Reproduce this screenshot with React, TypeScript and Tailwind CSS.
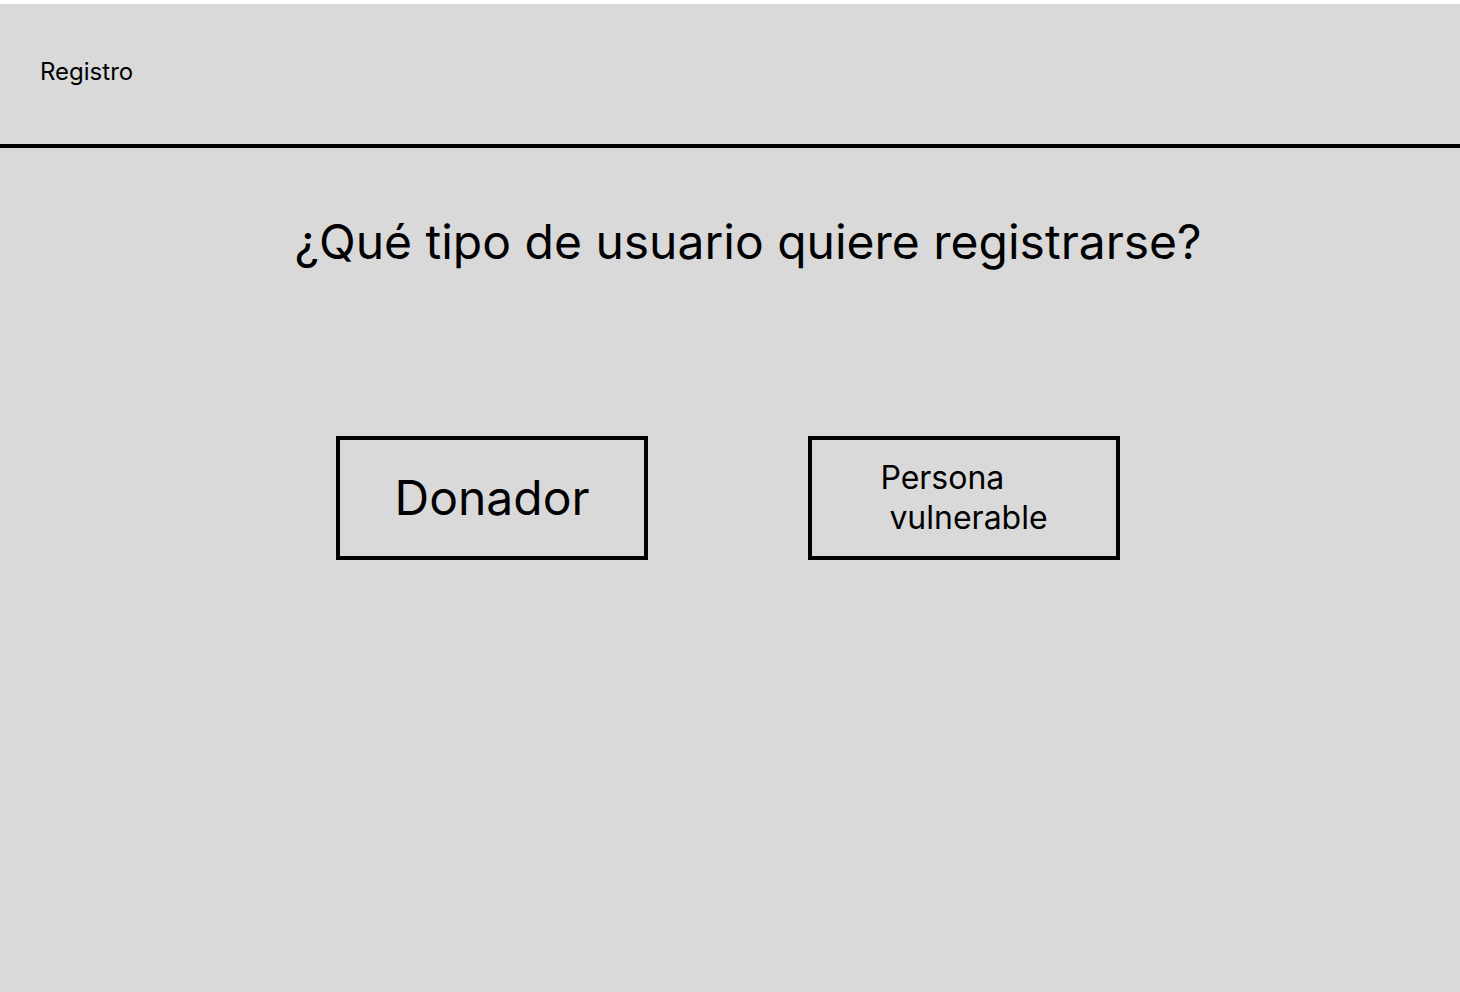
import React from 'react';

type Option = {
    label: string;
    lines?: string[];
};

const options: Option[] = [
    { label: 'Donador' },
    { label: 'Persona vulnerable', lines: ['Persona', ' vulnerable'] },
];

const OptionBox = ({ option }: { option: Option }) => {
    return (
        <button className="w-[312px] h-[124px] border-[4px] border-black flex items-center justify-center bg-transparent cursor-pointer">
            {option.lines ? (
                <span className="text-[32px] leading-[40px] text-black text-left whitespace-pre">
                    {option.lines.map((line, index) => (
                        <span key={index} className="block">
                            {line}
                        </span>
                    ))}
                </span>
            ) : (
                <span className="text-[48px] leading-none text-black">{option.label}</span>
            )}
        </button>
    );
};

const App = () => {
    return (
        <div
            className="w-full min-h-[992px] bg-white pt-[4px]"
            style={{ fontFamily: 'Inter, "Noto Sans", sans-serif' }}
        >
            <div className="min-h-[988px] bg-[#d9d9d9] flex flex-col">
                <header className="h-[144px] border-b-[4px] border-black pl-10 pt-[52px]">
                    <span className="text-2xl leading-8 text-black">Registro</span>
                </header>
                <main className="flex flex-col items-center pt-[70px]">
                    <h1 className="text-5xl leading-none text-black pl-9">
                        ¿Qué tipo de usuario quiere registrarse?
                    </h1>
                    <div className="flex gap-[160px] mt-[170px] pr-1">
                        {options.map((option, index) => (
                            <OptionBox key={index} option={option} />
                        ))}
                    </div>
                </main>
            </div>
        </div>
    );
};

export default App;
